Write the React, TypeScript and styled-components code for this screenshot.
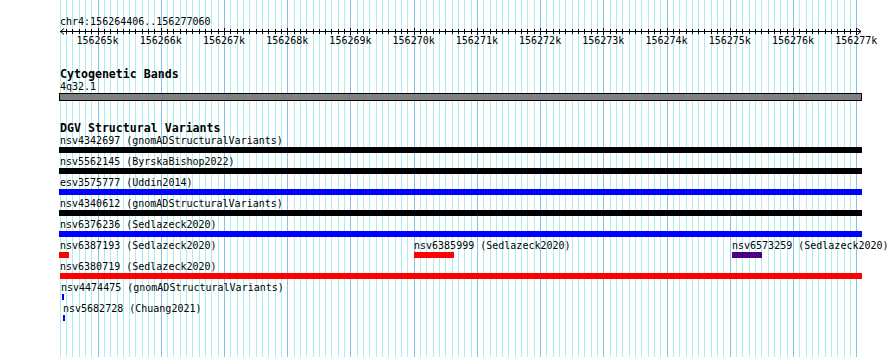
import styled, { createGlobalStyle } from "styled-components";

const START = 156264406;
const END = 156277060;
const X0 = 60;
const SPAN = 800;

const toX = (bp: number) => X0 + ((bp - START) * SPAN) / (END - START);

const GlobalStyle = createGlobalStyle`
  html, body {
    margin: 0;
    padding: 0;
    background: #ffffff;
  }
  body {
    font-family: "DejaVu Sans Mono", "Liberation Mono", monospace;
    color: #000000;
  }
`;

const Page = styled.div`
  position: relative;
  width: 890px;
  height: 357px;
  overflow: hidden;
  background: #ffffff;
`;

const GridLayer = styled.svg`
  position: absolute;
  left: 0;
  top: 0;
  width: 890px;
  height: 357px;
`;

const Content = styled.div`
  position: relative;
  display: flex;
  flex-direction: column;
`;

const RulerTrack = styled.div`
  display: flex;
  flex-direction: column;
  padding-top: 15px;
`;

// small 10px text sits in a 12px slot, nudged 1px low
const SmallText = styled.div`
  padding-top: 2px;
  font-size: 10px;
  line-height: 10px;
  white-space: nowrap;
`;

const Locus = styled(SmallText)`
  padding-left: 60px;
`;

const RulerDrawing = styled.svg`
  display: block;
  width: 890px;
  height: 7px;
  overflow: visible;
`;

const RulerLabels = styled.div`
  position: relative;
  height: 12px;
`;

const RulerLabel = styled(SmallText)`
  position: absolute;
  top: 0;
  transform: translateX(-50%);
`;

const Track = styled.section<{ $gap: number }>`
  display: flex;
  flex-direction: column;
  margin-top: ${(p) => p.$gap}px;
`;

const TrackTitle = styled.h2`
  margin: 0;
  padding: 2px 0 0 60px;
  font-size: 11.6px;
  line-height: 11px;
  font-weight: bold;
`;

const BandName = styled(SmallText)`
  padding-left: 60px;
`;

const BandBar = styled.div`
  margin: 1px 0 0 59px;
  width: 803px;
  height: 8px;
  box-sizing: border-box;
  border: 1px solid #000000;
  background: #808080;
`;

const FeatureRow = styled.div`
  position: relative;
  height: 21px;
`;

const Feature = styled.div`
  position: absolute;
  top: 0;
  display: flex;
  flex-direction: column;
`;

const FeatureBar = styled.div<{ $color: string }>`
  margin-top: 1px;
  height: 6px;
  background: ${(p) => p.$color};
`;

type Variant = {
  name: string;
  study: string;
  x: number;
  w: number;
  color: string;
  labelX?: number;
};

const BLACK = "#000000";
const BLUE = "#0000ff";
const RED = "#ff0000";
const INDIGO = "#4b0082";

const rows: Variant[][] = [
  [{ name: "nsv4342697", study: "gnomADStructuralVariants", x: 59, w: 803, color: BLACK }],
  [{ name: "nsv5562145", study: "ByrskaBishop2022", x: 59, w: 803, color: BLACK }],
  [{ name: "esv3575777", study: "Uddin2014", x: 59, w: 803, color: BLUE }],
  [{ name: "nsv4340612", study: "gnomADStructuralVariants", x: 59, w: 803, color: BLACK }],
  [{ name: "nsv6376236", study: "Sedlazeck2020", x: 59, w: 803, color: BLUE }],
  [
    { name: "nsv6387193", study: "Sedlazeck2020", x: 59, w: 10, color: RED },
    { name: "nsv6385999", study: "Sedlazeck2020", x: 414, w: 40, color: RED },
    { name: "nsv6573259", study: "Sedlazeck2020", x: 732, w: 30, color: INDIGO },
  ],
  [{ name: "nsv6380719", study: "Sedlazeck2020", x: 60, w: 802, color: RED }],
  [{ name: "nsv4474475", study: "gnomADStructuralVariants", x: 62, w: 2, color: BLUE, labelX: 61 }],
  [{ name: "nsv5682728", study: "Chuang2021", x: 63, w: 2, color: BLUE, labelX: 63 }],
];

const hundreds: number[] = [];
for (let bp = 156264400; bp <= 156277000; bp += 100) hundreds.push(bp);
const thousands = hundreds.filter((bp) => bp % 1000 === 0);

function Grid() {
  return (
    <GridLayer viewBox="0 0 890 357">
      {hundreds.map((bp) => {
        const x = Math.round(toX(bp)) + 0.5;
        const major = bp % 1000 === 0;
        return (
          <line
            key={bp}
            x1={x}
            x2={x}
            y1={0}
            y2={357}
            stroke={major ? "#80c4ea" : "#aaeef0"}
            strokeWidth={1}
          />
        );
      })}
    </GridLayer>
  );
}

function Ruler() {
  const right = 861;
  return (
    <RulerTrack>
      <Locus>chr4:156264406..156277060</Locus>
      <RulerDrawing viewBox="0 0 890 7">
        <line x1={60} x2={right} y1={4.5} y2={4.5} stroke="#000" strokeWidth={1} />
        <polyline points="64,1.5 60.5,4.5 64,7.5" fill="none" stroke="#000" strokeWidth={1} />
        <polyline
          points={`${right - 3.5},1.5 ${right},4.5 ${right - 3.5},7.5`}
          fill="none"
          stroke="#000"
          strokeWidth={1}
        />
        {hundreds.slice(1).map((bp) => {
          const x = Math.round(toX(bp)) + 0.5;
          const major = bp % 1000 === 0;
          return (
            <line
              key={bp}
              x1={x}
              x2={x}
              y1={major ? 1 : 2}
              y2={major ? 8 : 7}
              stroke="#000"
              strokeWidth={1}
            />
          );
        })}
      </RulerDrawing>
      <RulerLabels>
        {thousands.map((bp) => (
          <RulerLabel key={bp} style={{ left: toX(bp) }}>
            {bp / 1000}k
          </RulerLabel>
        ))}
      </RulerLabels>
    </RulerTrack>
  );
}

export default function App() {
  return (
    <Page>
      <GlobalStyle />
      <Grid />
      <Content>
        <Ruler />
        <Track $gap={21}>
          <TrackTitle>Cytogenetic Bands</TrackTitle>
          <BandName>4q32.1</BandName>
          <BandBar />
        </Track>
        <Track $gap={20}>
          <TrackTitle>DGV Structural Variants</TrackTitle>
          {rows.map((row, i) => {
            return (
              <FeatureRow key={i}>
                {row.map((v) => {
                  const left = v.labelX ?? Math.max(v.x, 60);
                  return (
                    <Feature key={v.name} style={{ left }}>
                      <SmallText>
                        {v.name} ({v.study})
                      </SmallText>
                      <FeatureBar $color={v.color} style={{ width: v.w, marginLeft: v.x - left }} />
                    </Feature>
                  );
                })}
              </FeatureRow>
            );
          })}
        </Track>
      </Content>
    </Page>
  );
}
